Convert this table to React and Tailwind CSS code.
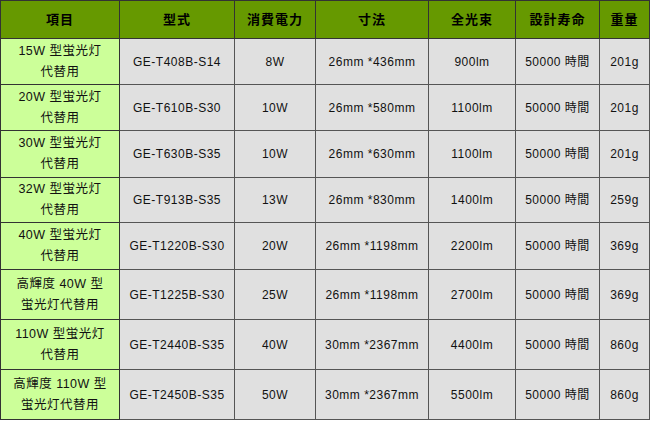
import React from "react";

const rows = [
  ["15W 型蛍光灯", "代替用", "GE-T408B-S14", "8W", "26mm *436mm", "900lm", "50000 時間", "201g", 46],
  ["20W 型蛍光灯", "代替用", "GE-T610B-S30", "10W", "26mm *580mm", "1100lm", "50000 時間", "201g", 46],
  ["30W 型蛍光灯", "代替用", "GE-T630B-S35", "10W", "26mm *630mm", "1100lm", "50000 時間", "201g", 47],
  ["32W 型蛍光灯", "代替用", "GE-T913B-S35", "13W", "26mm *830mm", "1400lm", "50000 時間", "259g", 45],
  ["40W 型蛍光灯", "代替用", "GE-T1220B-S30", "20W", "26mm *1198mm", "2200lm", "50000 時間", "369g", 47],
  ["高輝度 40W 型", "蛍光灯代替用", "GE-T1225B-S30", "25W", "26mm *1198mm", "2700lm", "50000 時間", "369g", 50],
  ["110W 型蛍光灯", "代替用", "GE-T2440B-S35", "40W", "30mm *2367mm", "4400lm", "50000 時間", "860g", 50],
  ["高輝度 110W 型", "蛍光灯代替用", "GE-T2450B-S35", "50W", "30mm *2367mm", "5500lm", "50000 時間", "860g", 50],
];

const headers = ["項目", "型式", "消費電力", "寸法", "全光束", "設計寿命", "重量"];
const widths = [119, 115, 81, 113, 87, 84, 50];

export default function App() {
  return (
    <div
      className="w-[650px] h-[421px] bg-white"
      style={{ fontFamily: '"Liberation Sans", "Noto Sans CJK JP", sans-serif' }}
    >
      <table className="table-fixed border-collapse w-[650px] text-[12px] text-[#111]">
        <colgroup>
          {widths.map((w, i) => (
            <col key={i} style={{ width: w }} />
          ))}
        </colgroup>
        <thead>
          <tr className="h-[38px] bg-[#669900]">
            {headers.map((h) => (
              <th
                key={h}
                className="border border-[#333] font-bold text-center text-[13px] text-black p-0 tracking-[1px]"
              >
                {h}
              </th>
            ))}
          </tr>
        </thead>
        <tbody>
          {rows.map((r, i) => (
            <tr key={i} style={{ height: r[8] }}>
              <td className="border border-[#333] bg-[#ccff99] text-center p-0 leading-[21px] text-[12.5px] tracking-[0.5px]">
                <div>{r[0]}</div>
                <div>{r[1]}</div>
              </td>
              {r.slice(2, 8).map((c, j) => (
                <td
                  key={j}
                  className="border border-[#555] bg-[#e0e0e0] text-center p-0 tracking-[0.5px]"
                >
                  {c}
                </td>
              ))}
            </tr>
          ))}
        </tbody>
      </table>
    </div>
  );
}
